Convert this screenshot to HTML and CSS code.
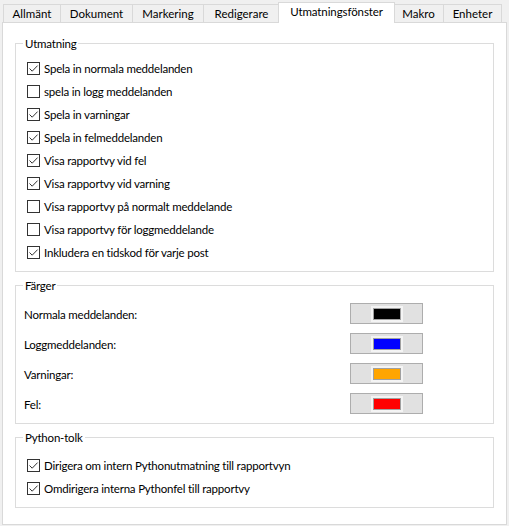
FILE: index.html
```html
<!DOCTYPE html>
<html lang="sv">
<head>
<meta charset="utf-8">
<title>Utmatningsfönster</title>
<link rel="stylesheet" href="styles.css">
</head>
<body>
<div class="window">
  <div class="tabs">
    <div class="tab t-allm">Allmänt</div>
    <div class="tab t-dok">Dokument</div>
    <div class="tab t-mark">Markering</div>
    <div class="tab t-red">Redigerare</div>
    <div class="tab active t-utm">Utmatningsfönster</div>
    <div class="tab t-mak">Makro</div>
    <div class="tab t-enh">Enheter</div>
  </div>
  <div class="panel">
    <fieldset class="group g-out">
      <legend>Utmatning</legend>
      <ul class="checks">
        <li><span class="cb"><svg class="tick" viewBox="0 0 11 11"><path d="M1.5 5.5 L4.2 8.2 L9.6 2.6"/></svg></span>Spela in normala meddelanden</li>
        <li><span class="cb"></span>spela in logg meddelanden</li>
        <li><span class="cb"><svg class="tick" viewBox="0 0 11 11"><path d="M1.5 5.5 L4.2 8.2 L9.6 2.6"/></svg></span>Spela in varningar</li>
        <li><span class="cb"><svg class="tick" viewBox="0 0 11 11"><path d="M1.5 5.5 L4.2 8.2 L9.6 2.6"/></svg></span>Spela in felmeddelanden</li>
        <li><span class="cb"><svg class="tick" viewBox="0 0 11 11"><path d="M1.5 5.5 L4.2 8.2 L9.6 2.6"/></svg></span>Visa rapportvy vid fel</li>
        <li><span class="cb"><svg class="tick" viewBox="0 0 11 11"><path d="M1.5 5.5 L4.2 8.2 L9.6 2.6"/></svg></span>Visa rapportvy vid varning</li>
        <li><span class="cb"></span>Visa rapportvy på normalt meddelande</li>
        <li><span class="cb"></span>Visa rapportvy för loggmeddelande</li>
        <li><span class="cb"><svg class="tick" viewBox="0 0 11 11"><path d="M1.5 5.5 L4.2 8.2 L9.6 2.6"/></svg></span>Inkludera en tidskod för varje post</li>
      </ul>
    </fieldset>
    <fieldset class="group g-col">
      <legend>Färger</legend>
      <div class="colors">
        <span class="clabel">Normala meddelanden:</span>
        <button class="cbtn" type="button"><span class="swatch sw-black"></span></button>
        <span class="clabel">Loggmeddelanden:</span>
        <button class="cbtn" type="button"><span class="swatch sw-blue"></span></button>
        <span class="clabel">Varningar:</span>
        <button class="cbtn" type="button"><span class="swatch sw-orange"></span></button>
        <span class="clabel">Fel:</span>
        <button class="cbtn" type="button"><span class="swatch sw-red"></span></button>
      </div>
    </fieldset>
    <fieldset class="group g-py">
      <legend>Python-tolk</legend>
      <ul class="checks">
        <li><span class="cb"><svg class="tick" viewBox="0 0 11 11"><path d="M1.5 5.5 L4.2 8.2 L9.6 2.6"/></svg></span>Dirigera om intern Pythonutmatning till rapportvyn</li>
        <li><span class="cb"><svg class="tick" viewBox="0 0 11 11"><path d="M1.5 5.5 L4.2 8.2 L9.6 2.6"/></svg></span>Omdirigera interna Pythonfel till rapportvy</li>
      </ul>
    </fieldset>
  </div>
</div>
</body>
</html>
```

FILE: styles.css
```css
html, body {
  margin: 0;
  padding: 0;
  background: #f0f0f0;
}
body {
  font-family: Lato, "Noto Sans", sans-serif;
  font-size: 11.5px;
  letter-spacing: -0.2px;
  color: #000;
}
.window {
  width: 505px;
  padding: 0 0 0 2px;
}
.tabs {
  display: flex;
  align-items: flex-end;
  height: 23px;
  padding-left: 1px;
  position: relative;
  z-index: 1;
  margin-bottom: -1px;
}
.tab {
  box-sizing: border-box;
  height: 18px;
  margin-bottom: 1px;
  border: 1px solid #d9d9d9;
  border-bottom: none;
  margin-left: -1px;
  background: #f0f0f0;
  text-align: center;
  line-height: 18px;
  white-space: nowrap;
  letter-spacing: 0;
}
.tab:first-child { margin-left: 0; }
.t-allm { width: 58px; }
.t-dok { width: 73px; }
.t-mark { width: 72px; }
.t-red { width: 77px; }
.t-utm { width: 117px; }
.t-mak { width: 51px; }
.t-enh { width: 59px; }
.tab.active {
  height: 21px;
  margin-bottom: 0;
  background: #fff;
  margin-left: -2px;
  margin-right: -2px;
  line-height: 18px;
  position: relative;
  z-index: 2;
  letter-spacing: -0.1px;
}
.tab.active + .tab { margin-left: 0; }
.panel {
  box-sizing: border-box;
  width: 505px;
  height: 503px;
  background: #fff;
  border: 1px solid #d9d9d9;
  padding: 13px 12px 0 12px;
}
.group {
  margin: 0 0 6px 0;
  border: 1px solid #dcdcdc;
  padding: 0 8px;
  min-width: 0;
}
.group legend {
  padding: 0 2px;
  margin-left: -1px;
  line-height: 15px;
}
.checks {
  list-style: none;
  margin: 0;
  padding: 6px 0 7px 3px;
}
.checks li {
  display: flex;
  align-items: center;
  height: 23px;
  white-space: nowrap;
}
.cb {
  box-sizing: border-box;
  width: 13px;
  height: 13px;
  border: 1px solid #333;
  background: #fff;
  margin-right: 4px;
  flex: none;
  display: block;
}
.tick {
  display: block;
  width: 11px;
  height: 11px;
}
.tick path {
  fill: none;
  stroke: #333;
  stroke-width: 1;
}
.colors {
  display: grid;
  grid-template-columns: 326px 73px;
  row-gap: 9px;
  align-items: center;
  padding: 10px 0 9px 0;
}
.clabel {
  white-space: nowrap;
  padding-top: 2px;
}
.cbtn {
  box-sizing: border-box;
  width: 73px;
  height: 21px;
  margin: 0;
  padding: 0;
  background: #e1e1e1;
  border: 1px solid #adadad;
  display: flex;
  align-items: center;
  justify-content: center;
}
.swatch {
  box-sizing: border-box;
  width: 32px;
  height: 16px;
  border: 2px solid #f4f4f4;
  display: block;
  position: relative;
}
.swatch::after {
  content: "";
  position: absolute;
  inset: 0;
  border: 1px solid #a0a0a0;
}
.sw-black { background: #000; }
.sw-blue { background: #0000ff; }
.sw-orange { background: #ffa500; }
.sw-red { background: #ff0000; }
.g-py .checks {
  padding-top: 9px;
  padding-bottom: 7px;
}
```
